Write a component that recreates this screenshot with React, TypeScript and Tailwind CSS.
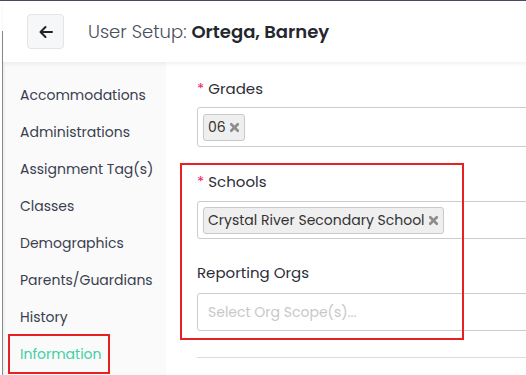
import React from 'react';

const NAV_ITEMS = [
  'Accommodations',
  'Administrations',
  'Assignment Tag(s)',
  'Classes',
  'Demographics',
  'Parents/Guardians',
  'History',
  'Information',
];

const Chip: React.FC<{ label: string }> = ({ label }) => (
  <span className="inline-flex items-center h-[27px] pl-[4px] pr-[4px] bg-[#efefef] border border-[#c9c9c9] rounded-[3px] text-[14px] text-[#333]">
    {label}
    <svg width="11" height="11" viewBox="0 0 10 10" className="ml-[3px]">
      <path d="M2 2 L8 8 M8 2 L2 8" stroke="#8d8d8d" strokeWidth="2.4" strokeLinecap="round" />
    </svg>
  </span>
);

const App: React.FC = () => {
  return (
    <div
      className="w-[526px] h-[375px] overflow-hidden bg-white border-t border-[#474a5c] flex"
      style={{ fontFamily: 'Poppins, Inter, "Open Sans", sans-serif' }}
    >
      {/* left edge strip */}
      <div className="w-[3px] shrink-0 flex flex-col">
        <div className="h-[30px]" />
        <div className="flex-1 border-r border-[#8a8a8a]" />
      </div>

      <div className="flex-1 flex flex-col">
        {/* Header */}
        <div className="h-[61px] shrink-0 flex items-center pl-[24px] shadow-[0_2px_4px_rgba(0,0,0,0.06)] relative z-10">
          <button className="w-[37px] h-[35px] flex items-center justify-center bg-[#f6f7f9] border border-[#e2e4e8] rounded-[4px]">
            <svg width="14" height="14" viewBox="0 0 14 14">
              <path d="M13 7 H2 M6.5 2 L1.5 7 L6.5 12" stroke="#222" strokeWidth="2" fill="none" strokeLinecap="round" strokeLinejoin="round" />
            </svg>
          </button>
          <h1 className="ml-[24px] text-[18px] text-[#4a4e5c] font-light">
            User Setup: <span className="font-semibold text-[#25272e]">Ortega, Barney</span>
          </h1>
        </div>

        <div className="flex flex-1">
          {/* Sidebar */}
          <nav className="w-[163px] shrink-0 bg-[#fafafa] pt-[15px] shadow-[inset_3px_0_3px_-2px_rgba(0,0,0,0.08)]">
            <ul className="flex flex-col">
              {NAV_ITEMS.map((item) => (
                <li
                  key={item}
                  className={`relative h-[37px] flex items-center pl-[17px] text-[14px] ${
                    item === 'Information' ? 'text-[#3fcfa6]' : 'text-[#3a3e50]'
                  }`}
                >
                  {item}
                  {item === 'Information' && (
                    <span className="absolute left-[5px] top-[-2px] w-[102px] h-[40px] border-2 border-[#e8201f]" />
                  )}
                </li>
              ))}
            </ul>
          </nav>

          {/* Main */}
          <main className="flex-1 pl-[31px] pt-[16px]">
            <div className="w-[400px]">
              <label className="block text-[15px] text-[#2b2d36] h-[22px]">
                <span className="text-[#f0245c] mr-[4px]">*</span>Grades
              </label>
              <div className="mt-[7px] h-[40px] border border-[#cccccc] rounded-[3px] flex items-center px-[5px]">
                <Chip label="06" />
              </div>

              <div className="relative mt-[24px]">
                <span className="absolute left-[-17px] top-[-8px] w-[284px] h-[177px] border-2 border-[#e8201f] pointer-events-none" />
                <label className="block text-[15px] text-[#2b2d36] h-[22px]">
                  <span className="text-[#f0245c] mr-[4px]">*</span>Schools
                </label>
                <div className="mt-[8px] h-[38px] border border-[#cccccc] rounded-[3px] flex items-center px-[5px]">
                  <Chip label="Crystal River Secondary School" />
                </div>

                <label className="block mt-[23px] text-[15px] text-[#2b2d36] h-[22px]">Reporting Orgs</label>
                <div className="mt-[9px] h-[38px] border border-[#cccccc] rounded-[3px] flex items-center px-[10px] text-[14px] text-[#c8c8c8]">
                  Select Org Scope(s)...
                </div>
              </div>

              <div className="mt-[26px] border-t border-[#dcdcdc]" />
            </div>
          </main>
        </div>
      </div>
    </div>
  );
};

export default App;
